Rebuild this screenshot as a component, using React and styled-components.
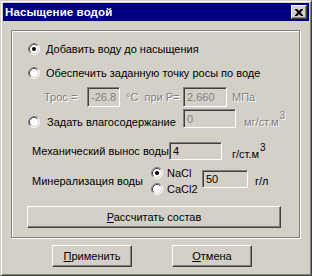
import React from 'react';
import styled, { createGlobalStyle } from 'styled-components';

const GlobalStyle = createGlobalStyle`
  body {
    margin: 0;
    font-family: "Liberation Sans", Arial, sans-serif;
    font-size: 11px;
    background: #d4d0c8;
  }
`;

const Window = styled.div`
  width: 312px;
  height: 276px;
  box-sizing: border-box;
  background: #d4d0c8;
  border: 1px solid;
  border-color: #d4d0c8 #404040 #404040 #d4d0c8;
  box-shadow: inset 1px 1px 0 #fff, inset -1px -1px 0 #808080;
  padding: 2px;
  display: flex;
  flex-direction: column;
  color: #000;
`;

const TitleBar = styled.div`
  height: 18px;
  background: #000080;
  display: flex;
  align-items: center;
  justify-content: space-between;
  padding: 0 2px;
`;

const Title = styled.span`
  color: #fff;
  font-weight: bold;
  font-size: 11.5px;
  line-height: 14px;
  letter-spacing: 0.1px;
`;

const CloseButton = styled.div`
  width: 16px;
  height: 14px;
  box-sizing: border-box;
  background: #d4d0c8;
  border: 1px solid;
  border-color: #fff #404040 #404040 #fff;
  box-shadow: inset -1px -1px 0 #808080;
  display: flex;
  align-items: center;
  justify-content: center;
`;

const GroupBox = styled.div`
  margin: 9px 0 0 8px;
  width: 289px;
  height: 208px;
  box-sizing: border-box;
  border: 1px solid #808080;
  box-shadow: 1px 1px 0 #fff, inset 1px 1px 0 #fff;
  display: flex;
  flex-direction: column;
`;

const Row = styled.div`
  display: flex;
  align-items: center;
  height: ${p => p.$h}px;
  margin-top: ${p => p.$mt}px;
  padding-left: ${p => p.$pl}px;
`;

const Text = styled.span`
  line-height: 13px;
  white-space: nowrap;
  width: ${p => (p.$w ? `${p.$w}px` : 'auto')};
  margin-left: ${p => p.$ml || 0}px;
  color: ${p => (p.$disabled ? '#808080' : '#000')};
  text-shadow: ${p => (p.$disabled ? '1px 1px 0 #fff' : 'none')};
  flex-shrink: 0;
`;

const Sup = styled.span`
  font-size: 10px;
  vertical-align: 7px;
  margin-left: 1px;
`;

const Field = styled.div`
  width: ${p => p.$w}px;
  height: ${p => p.$h || 20}px;
  margin-left: ${p => p.$ml || 0}px;
  box-sizing: border-box;
  border: 1px solid;
  border-color: #808080 #fff #fff #808080;
  box-shadow: inset 1px 1px 0 #404040, inset -1px -1px 0 #d4d0c8;
  background: #d4d0c8;
  padding: 0 3px;
  display: flex;
  align-items: center;
  color: ${p => (p.$disabled ? '#808080' : '#000')};
  flex-shrink: 0;
  align-self: ${p => (p.$top ? 'flex-start' : 'center')};
  margin-top: ${p => p.$top || 0}px;
`;

const RadioLabel = styled.label`
  display: flex;
  align-items: center;
  gap: ${p => p.$gap || 6}px;
  height: 14px;
  white-space: nowrap;
  align-self: ${p => (p.$top ? 'flex-start' : 'auto')};
  margin-top: ${p => p.$top || 0}px;
`;

const RadioColumn = styled.div`
  display: flex;
  flex-direction: column;
  gap: 2px;
  width: ${p => p.$w}px;
  align-self: flex-start;
`;

const Button = styled.div`
  width: ${p => p.$w}px;
  height: 22px;
  box-sizing: border-box;
  background: #d4d0c8;
  border: 1px solid;
  border-color: #fff #404040 #404040 #fff;
  box-shadow: inset -1px -1px 0 #808080;
  display: flex;
  align-items: center;
  justify-content: center;
  line-height: 13px;
`;

const Footer = styled.div`
  display: flex;
  gap: 40px;
  margin-top: 7px;
  padding-left: 49px;
`;

const Radio = ({ checked }) => (
  <svg width="12" height="12" viewBox="0 0 12 12">
    <circle cx="6" cy="6" r="5" fill="#fff" />
    <path d="M2.11 9.89 A5.5 5.5 0 0 1 9.89 2.11" fill="none" stroke="#808080" />
    <path d="M9.89 2.11 A5.5 5.5 0 0 1 2.11 9.89" fill="none" stroke="#fff" />
    <path d="M2.82 9.18 A4.5 4.5 0 0 1 9.18 2.82" fill="none" stroke="#404040" />
    <path d="M9.18 2.82 A4.5 4.5 0 0 1 2.82 9.18" fill="none" stroke="#d4d0c8" />
    {checked && <circle cx="6" cy="6" r="2" fill="#000" />}
  </svg>
);

const CloseIcon = () => (
  <svg width="8" height="7" viewBox="0 0 8 7">
    <path d="M0 0h2.2l1.8 2 1.8-2H8v.8L5.5 3.5 8 6.2V7H5.8L4 5 2.2 7H0v-.8l2.5-2.7L0 .8z" fill="#000" />
  </svg>
);

export default function App() {
  return (
    <>
      <GlobalStyle />
      <Window>
        <TitleBar>
          <Title>Насыщение водой</Title>
          <CloseButton>
            <CloseIcon />
          </CloseButton>
        </TitleBar>
        <GroupBox>
          <Row $h={18} $mt={9} $pl={16}>
            <RadioLabel>
              <Radio checked />
              <Text>Добавить воду до насыщения</Text>
            </RadioLabel>
          </Row>
          <Row $h={18} $mt={6} $pl={16}>
            <RadioLabel>
              <Radio />
              <Text>Обеспечить заданную точку росы по воде</Text>
            </RadioLabel>
          </Row>
          <Row $h={20} $mt={5} $pl={32}>
            <Text $disabled $w={43}>Трос =</Text>
            <Field $w={33} $disabled>-26.8</Field>
            <Text $disabled $w={57} $ml={6}>°C&nbsp; при P=</Text>
            <Field $w={44} $disabled>2.660</Field>
            <Text $disabled $ml={5}>МПа</Text>
          </Row>
          <Row $h={19} $mt={2} $pl={16}>
            <RadioLabel $gap={7} $top={6}>
              <Radio />
              <Text $w={136}>Задать влагосодержание</Text>
            </RadioLabel>
            <Field $w={53} $h={19} $disabled>0</Field>
            <Text $disabled $ml={8}>мг/ст.м<Sup>3</Sup></Text>
          </Row>
          <Row $h={18} $mt={14} $pl={20}>
            <Text $w={137}>Механический вынос воды</Text>
            <Field $w={53} $h={18}>4</Field>
            <Text $ml={10}>г/ст.м<Sup>3</Sup></Text>
          </Row>
          <Row $h={30} $mt={6} $pl={20}>
            <Text $w={119}>Минерализация воды</Text>
            <RadioColumn $w={51}>
              <RadioLabel $gap={4}>
                <Radio checked />
                <Text>NaCl</Text>
              </RadioLabel>
              <RadioLabel $gap={4}>
                <Radio />
                <Text>CaCl2</Text>
              </RadioLabel>
            </RadioColumn>
            <Field $w={46} $h={18} $top={4}>50</Field>
            <Text $ml={7}>г/л</Text>
          </Row>
          <Row $h={22} $mt={10} $pl={15}>
            <Button $w={254}><span><u>Р</u>ассчитать состав</span></Button>
          </Row>
        </GroupBox>
        <Footer>
          <Button $w={80}><span><u>П</u>рименить</span></Button>
          <Button $w={80}><span><u>О</u>тмена</span></Button>
        </Footer>
      </Window>
    </>
  );
}
